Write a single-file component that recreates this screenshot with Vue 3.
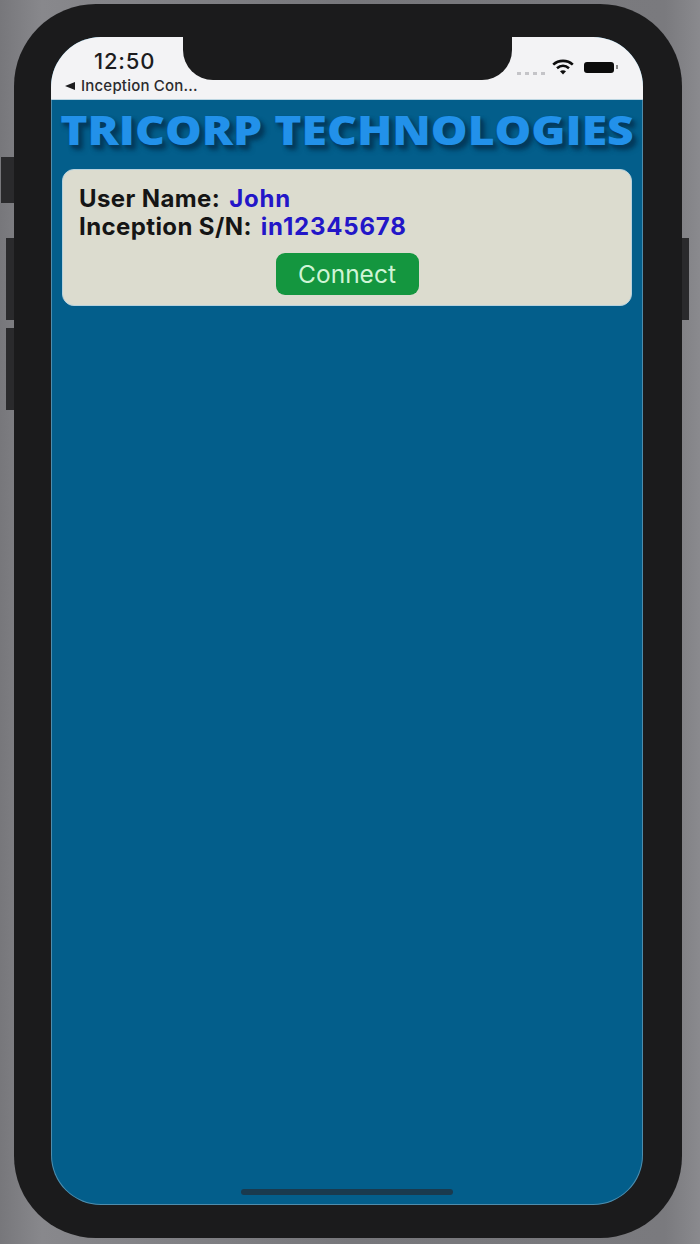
<script setup>
const rows = [
  { label: 'User Name:', value: 'John' },
  { label: 'Inception S/N:', value: 'in12345678' }
]
</script>

<template>
  <div class="stage">
    <span class="side mute"></span>
    <span class="side volup"></span>
    <span class="side voldown"></span>
    <span class="side power"></span>
    <div class="phone">
      <div class="screen">
        <header class="status">
          <div class="status-left">
            <div class="time">12:50</div>
            <div class="back"><span class="back-arrow"></span>Inception Con...</div>
          </div>
          <div class="status-right">
            <span class="dots"><i></i><i></i><i></i><i></i></span>
            <svg class="wifi" viewBox="0 0 22 16" width="22" height="16">
              <path d="M1.2 5.6C6.6.6 15.4.6 20.8 5.6" fill="none" stroke="#0d0d0d" stroke-width="2.6" />
              <path d="M5 9.2c3.6-3.1 8.4-3.1 12 0" fill="none" stroke="#0d0d0d" stroke-width="2.6" />
              <path d="M8 12.2c1.8-1.4 4.2-1.4 6 0L11 15.6z" fill="#0d0d0d" />
            </svg>
            <span class="battery"></span>
            <span class="battery-tip"></span>
          </div>
        </header>
        <div class="notch"></div>
        <main class="content">
          <h1 class="title">TRICORP TECHNOLOGIES</h1>
          <section class="card">
            <div v-for="row in rows" :key="row.label" class="row">
              <span class="label">{{ row.label }}</span>
              <span class="value">{{ row.value }}</span>
            </div>
            <button class="connect" type="button">Connect</button>
          </section>
          <div class="spacer"></div>
          <div class="home"></div>
        </main>
      </div>
    </div>
  </div>
</template>

<style>
html, body { margin: 0; background: #77777b; }
</style>

<style scoped>
.stage {
  position: relative;
  width: 700px;
  height: 1244px;
  padding: 4px 18px 6px 14px;
  box-sizing: border-box;
  background: linear-gradient(90deg, #77777b, #88888c 6%, #77777b 50%, #7a7a7e 95%, #8a8a8e);
  overflow: hidden;
  font-family: Inter, "Liberation Sans", Arial, sans-serif;
}
.side { position: absolute; background: #2a2a2c; }
.mute { left: 1px; top: 157px; width: 14px; height: 46px; }
.volup { left: 6px; top: 238px; width: 9px; height: 82px; }
.voldown { left: 6px; top: 328px; width: 9px; height: 82px; }
.power { left: 681px; top: 238px; width: 8px; height: 82px; }
.phone {
  position: relative;
  height: 100%;
  padding: 33px 39px 33px 37px;
  box-sizing: border-box;
  background: #1b1b1c;
  border-radius: 82px;
}
.screen {
  position: relative;
  height: 100%;
  display: flex;
  flex-direction: column;
  border-radius: 50px;
  overflow: hidden;
  background: #035e8b;
  box-shadow: inset 0 0 0 1px rgba(170, 200, 215, .45);
}
.status {
  flex: none;
  height: 63px;
  box-sizing: border-box;
  display: flex;
  justify-content: space-between;
  background: #f3f3f5;
  border-bottom: 1px solid #bcd6e2;
}
.status-left { padding: 13px 0 0 14px; }
.time {
  padding-left: 29px;
  font-size: 22px;
  line-height: 22px;
  font-weight: 500;
  color: #1c1c1e;
  letter-spacing: .8px;
}
.back {
  display: flex;
  align-items: center;
  margin-top: 6px;
  font-size: 15px;
  line-height: 16px;
  font-weight: 500;
  letter-spacing: .2px;
  color: #2b2b2e;
  white-space: nowrap;
}
.back-arrow {
  width: 0;
  height: 0;
  margin-right: 6px;
  border-top: 4px solid transparent;
  border-bottom: 4px solid transparent;
  border-right: 10px solid #1c1c1e;
}
.status-right {
  display: flex;
  align-items: center;
  align-self: flex-start;
  padding: 22px 25px 0 0;
}
.dots { display: flex; gap: 4px; margin-right: 7px; margin-top: 12px; }
.dots i { width: 4px; height: 3px; background: #c4c4c8; }
.wifi { margin-right: 10px; }
.battery { width: 30px; height: 11px; background: #0b0b0b; border-radius: 3px; }
.battery-tip { width: 2px; height: 4px; margin-left: 2px; background: #888; }
.notch {
  position: absolute;
  left: 132px;
  top: -1px;
  width: 329px;
  height: 44px;
  background: #1b1b1c;
  border-radius: 0 0 30px 30px;
}
.content {
  flex: 1;
  display: flex;
  flex-direction: column;
  min-height: 0;
}
.title {
  margin: 0;
  padding-top: 4px;
  text-align: center;
  font-family: "Open Sans", "DejaVu Sans", sans-serif;
  font-size: 41px;
  line-height: 50px;
  font-weight: 800;
  white-space: nowrap;
  color: #2291ea;
  text-shadow: 2px 3px 3px #043a5c, 4px 5px 5px rgba(3, 40, 66, .6);
  transform: scaleX(1.127);
}
.card {
  display: flex;
  flex-direction: column;
  margin: 15px 11px 0 11px;
  padding: 14px 16px 10px;
  height: 137px;
  box-sizing: border-box;
  background: #dcdccf;
  border: 1px solid #b8d2dd;
  border-radius: 12px;
}
.row { display: flex; gap: 9px; height: 28px; align-items: center; font-size: 24px; font-weight: 700; }
.label { color: #151515; letter-spacing: .4px; }
.value { color: #2316c8; letter-spacing: .8px; }
.connect {
  align-self: center;
  width: 143px;
  height: 42px;
  margin-top: 13px;
  border: none;
  border-radius: 9px;
  background: #14963f;
  color: #cff5d6;
  font-family: Inter, "Liberation Sans", Arial, sans-serif;
  font-size: 24.5px;
  padding: 0;
}
.spacer { flex: 1; }
.home {
  flex: none;
  align-self: center;
  width: 212px;
  height: 6px;
  margin: 0 0 10px 0;
  border-radius: 4px;
  background: #1a3a4e;
}
</style>
